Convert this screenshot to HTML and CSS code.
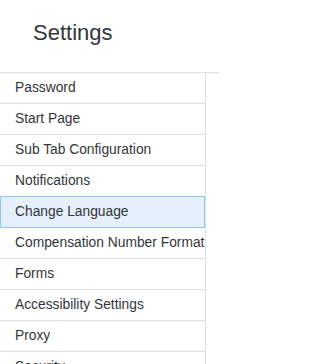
FILE: index.html
```html
<!DOCTYPE html>
<html lang="en">
<head>
<meta charset="utf-8">
<title>Settings</title>
<link rel="stylesheet" href="styles.css">
</head>
<body>
<div class="page">
  <header class="header">
    <h1 class="title">Settings</h1>
  </header>
  <div class="body">
    <nav class="menu">
      <div class="item">Password</div>
      <div class="item">Start Page</div>
      <div class="item">Sub Tab Configuration</div>
      <div class="item">Notifications</div>
      <div class="item selected">Change Language</div>
      <div class="item">Compensation Number Format</div>
      <div class="item">Forms</div>
      <div class="item">Accessibility Settings</div>
      <div class="item">Proxy</div>
      <div class="item">Security</div>
    </nav>
    <main class="content"></main>
  </div>
</div>
</body>
</html>
```
FILE: styles.css
```css
html, body {
  margin: 0;
  padding: 0;
  background: #ffffff;
  overflow: hidden;
}
body {
  font-family: "Liberation Sans", Arial, sans-serif;
  color: #32363a;
}
.page {
  width: 219px;
  height: 364px;
  display: flex;
  flex-direction: column;
  overflow: hidden;
}
.header {
  height: 72px;
  flex-shrink: 0;
  box-sizing: border-box;
  padding: 20px 0 0 33px;
}
.title {
  margin: 0;
  font-size: 22px;
  line-height: 26px;
  font-weight: normal;
  color: #32363a;
}
.body {
  display: flex;
  border-top: 1px solid #e0e0e0;
  flex: 1;
  min-height: 0;
}
.menu {
  width: 205px;
  border-right: 1px solid #e0e0e0;
  display: flex;
  flex-direction: column;
  flex-shrink: 0;
}
.content {
  flex: 1;
}
.item {
  height: 30px;
  line-height: 30px;
  border-bottom: 1px solid #e0e0e0;
  padding-left: 15px;
  font-size: 13.8px;
  color: #32363a;
  white-space: nowrap;
  overflow: hidden;
  flex-shrink: 0;
}
.item.selected {
  margin-top: -1px;
  border: 1px solid #91c8f6;
  padding-left: 14px;
  background: #e5f0fa;
}
```
